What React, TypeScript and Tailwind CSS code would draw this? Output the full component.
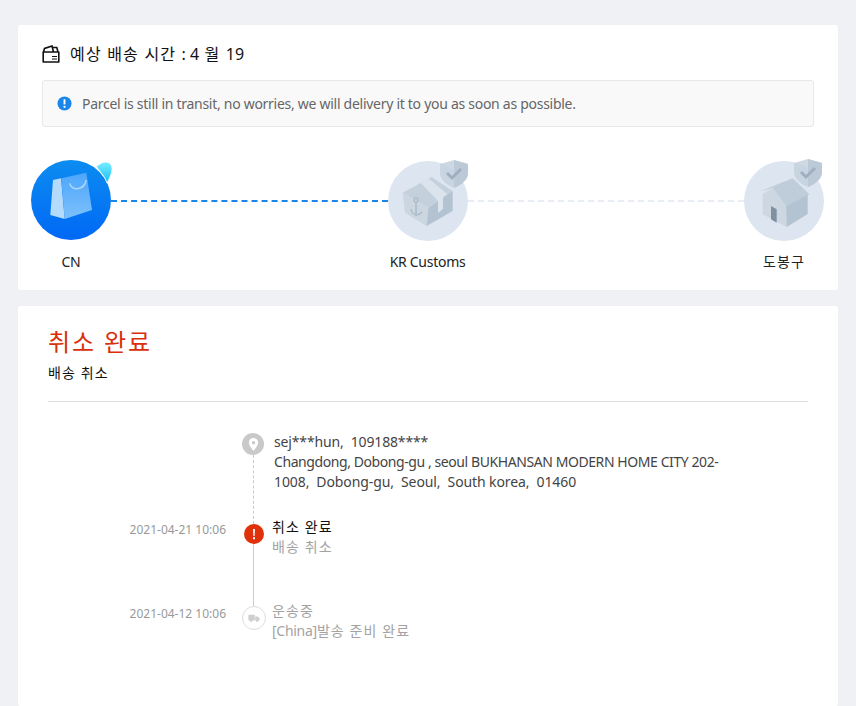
import React from "react";

function K({ children }: { children: React.ReactNode }) {
  return <span className="tracking-[1.1px]">{children}</span>;
}

function ShieldBadge({ className }: { className: string }) {
  return (
    <svg viewBox="0 0 28 28" className={`absolute h-7 w-7 ${className}`}>
      <path d="M14 0 L28 4 V13 C28 20 21 25 14 28 C7 25 0 20 0 13 V4 Z" fill="#c5d1de" fillOpacity="0.85" />
      <path d="M14 0 L28 4 V13 C28 20 21 25 14 28 Z" fill="#b9c7d5" fillOpacity="0.85" />
      <path d="M7 13 L12 18 L21 9" fill="none" stroke="#a0afbf" strokeWidth="3" />
    </svg>
  );
}

function BagIcon() {
  return (
    <svg viewBox="0 0 80 80" className="size-20">
      <defs>
        <linearGradient id="bg" x1="0" y1="0" x2="0" y2="1">
          <stop offset="0" stopColor="#0c8cf0" />
          <stop offset="1" stopColor="#0068f5" />
        </linearGradient>
        <linearGradient id="bag" x1="0" y1="0" x2="0" y2="1">
          <stop offset="0" stopColor="#4da6fb" />
          <stop offset="1" stopColor="#7cc0fc" />
        </linearGradient>
      </defs>
      <circle cx="40" cy="40" r="40" fill="url(#bg)" />
      <path d="M22 20 L30 18.3 L33.7 59 L19.3 55 Z" fill="#b4dafc" />
      <path d="M30.3 18.3 L55.3 12.7 L61 50 L33.7 59 Z" fill="url(#bag)" />
      <path d="M38.7 23.3 C40 31 53 31 55.3 20" fill="none" stroke="#a9d8fd" strokeWidth="1.5" />
    </svg>
  );
}

function BoxIcon() {
  return (
    <svg viewBox="0 0 80 80" className="size-20">
      <circle cx="40" cy="40" r="40" fill="#dce5f0" />
      <path d="M14.7 31.7 L43.7 16 L64.7 30 L40.3 46.7 Z" fill="#c4d1dd" />
      <path d="M14.7 31.7 L40.3 46.7 L38.7 65 L17 51.7 Z" fill="#cbd6e1" />
      <path d="M40.3 46.7 L64.7 30 V50 L38.7 65 Z" fill="#b3c3d2" />
      <path d="M32 21 L40 17 L59 33 L55 36 V48 L50 52 V40 Z" fill="#dbe4ec" />
      <path d="M28 41 V55 M23 48 C24 55 31 55 34 51" fill="none" stroke="#aebdcb" strokeWidth="1.6" />
      <circle cx="28" cy="39" r="2" fill="none" stroke="#aebdcb" strokeWidth="1.4" />
    </svg>
  );
}

function HouseIcon() {
  return (
    <svg viewBox="0 0 80 80" className="size-20">
      <circle cx="40" cy="40" r="40" fill="#dce5f0" />
      <path d="M18.7 33 L28.7 26.7 L42 45 L42.7 66 L18.7 53.3 Z" fill="#cdd7e1" />
      <path d="M42 45 L63.7 32 V53 L42.7 66 Z" fill="#b3c3d2" />
      <path d="M15.3 30.7 L48.7 17.3 L65.3 33.3 L42 45 L28.7 26.7 Z" fill="#bfcdda" />
      <path d="M27 45 L32.7 48.3 V61.7 L27 58.3 Z" fill="#7f909f" />
    </svg>
  );
}

function Step({ label, icon, children }: { label: React.ReactNode; icon: React.ReactNode; children?: React.ReactNode }) {
  return (
    <div className="relative flex w-20 shrink-0 flex-col items-center">
      <div className="h-[81px]">{icon}</div>
      {children}
      <div className="mt-[11px] whitespace-nowrap text-[14px] leading-5 text-[#222]">{label}</div>
    </div>
  );
}

export default function App() {
  return (
    <div className="flex h-[706px] flex-col gap-4 overflow-hidden bg-[#eff1f5] px-[18px] pt-[25px] font-['Noto_Sans','Noto_Sans_CJK_KR',sans-serif] tracking-[-0.28px]">
      <section className="h-[265px] shrink-0 rounded-[2px] bg-white pt-[19px]">
        <div className="mx-6 flex h-5 items-center gap-[10px] text-[16px] text-[#111]">
          <svg viewBox="0 0 18 18" className="size-[18px]" fill="none" stroke="#111" strokeWidth="1.6">
            <path d="M1.2 7 H16.8 V17 H1.2 Z" strokeLinejoin="round" />
            <path d="M1.5 7 L2.5 3.5 L10 1 L11.5 7" />
            <path d="M10.5 2.5 H14.8 L16 7" />
            <path d="M10 11.5 H15 M10 14 H15" strokeWidth="1" />
          </svg>
          <span className="tracking-[1.2px]">
            예상 배송 시간 <span className="tracking-normal">: 4</span> 월 <span className="tracking-normal">19</span>
          </span>
        </div>
        <div className="mx-6 mt-[16px] flex h-[47px] items-center gap-[10px] rounded-[3px] border border-[#e8e8e8] bg-[#f9f9f9] px-[14px] text-[14px] text-[#666]">
          <svg viewBox="0 0 16 16" className="size-[15px] shrink-0">
            <circle cx="8" cy="8" r="7.5" fill="#1a86ea" />
            <path d="M8 3.5 V9" stroke="#fff" strokeWidth="2" />
            <circle cx="8" cy="11.5" r="1.2" fill="#fff" />
          </svg>
          <span>Parcel is still in transit, no worries, we will delivery it to you as soon as possible.</span>
        </div>
        <div className="mt-[33px] flex items-start pl-[13px] pr-[14px]">
          <Step label="CN" icon={<BagIcon />}>
            <svg viewBox="0 0 18 23" className="absolute right-[-2px] top-[1px] h-[23px] w-[18px]">
              <defs>
                <linearGradient id="drop" x1="0" y1="0" x2="0" y2="1">
                  <stop offset="0" stopColor="#7cecff" />
                  <stop offset="1" stopColor="#12c0f6" />
                </linearGradient>
              </defs>
              <path d="M1 5 C4 4.5 6 1 10.5 1 C15 1 17.5 4 17 9 C16.5 14 13.5 19 12 22 C10 15 4 10 1 5 Z" fill="url(#drop)" stroke="#fff" strokeWidth="0.8" />
            </svg>
          </Step>
          <div className="mt-[40px] flex-1 border-t-2 border-dashed border-[#1a86ea]" />
          <Step label="KR Customs" icon={<div className="pt-px"><BoxIcon /></div>}>
            <ShieldBadge className="right-0 top-0" />
          </Step>
          <div className="mt-[40px] flex-1 border-t-2 border-dashed border-[#e8edf3]" />
          <Step label={<K>도봉구</K>} icon={<div className="pt-px"><HouseIcon /></div>}>
            <ShieldBadge className="right-[2px] top-[-1px]" />
          </Step>
        </div>
      </section>

      <section className="flex-1 rounded-[2px] bg-white px-[30px] pt-[19px]">
        <div className="text-[24px] leading-[34px] tracking-[1.9px] text-[#d9300b]">취소 완료</div>
        <div className="mt-[4px] border-b border-[#dcdcdc] pb-[18px] text-[14px] leading-5 text-[#111]"><K>배송 취소</K></div>
        <div className="mt-[30px] flex flex-col">
          <div className="flex h-[92px]">
            <div className="w-[194px] shrink-0" />
            <div className="flex w-[24px] shrink-0 flex-col items-center">
              <div className="-ml-[2px] mt-px flex size-[22px] items-center justify-center rounded-full bg-[#c9c9c9]">
                <svg viewBox="0 0 12 14" className="h-[13px] w-[11px]">
                  <path fillRule="evenodd" d="M6 0 C9 0 11 2 11 5 C11 8 8 11 6 14 C4 11 1 8 1 5 C1 2 3 0 6 0 Z M6 3.3 A1.8 1.8 0 1 0 6 6.9 A1.8 1.8 0 1 0 6 3.3 Z" fill="#fff" />
                </svg>
              </div>
              <div className="-ml-px flex-1 border-l border-dashed border-[#c9c9c9]" />
            </div>
            <div className="ml-[8px] w-[462px] whitespace-pre-wrap text-[14px] leading-5 text-[#444]">
              <div className="tracking-[-0.14px]">{"sej***hun,  109188****"}</div>
              <div className="tracking-[-0.42px]">Changdong, Dobong-gu , seoul BUKHANSAN MODERN HOME CITY 202-</div>
              <div className="tracking-[-0.1px]">{"1008,  Dobong-gu,  Seoul,  South korea,  01460"}</div>
            </div>
          </div>
          <div className="flex h-[82px]">
            <div className="-mt-[3px] w-[178px] shrink-0 text-right text-[12px] leading-[18px] tracking-normal text-[#999]">2021-04-21 10:06</div>
            <div className="ml-[16px] flex w-[24px] shrink-0 flex-col items-center">
              <div className="flex size-5 items-center justify-center rounded-full bg-[#e0310a]">
                <svg viewBox="0 0 4 12" className="h-3 w-1" fill="#fff">
                  <path d="M1 1 H3 L2.6 8 H1.4 Z" />
                  <rect x="1" y="9.2" width="2" height="2" />
                </svg>
              </div>
              <div className="-ml-px w-px flex-1 bg-[#cfcfcf]" />
            </div>
            <div className="ml-[6px] -mt-[7px] text-[14px] leading-5">
              <div className="text-[#111]"><K>취소 완료</K></div>
              <div className="text-[#a3a3a3]"><K>배송 취소</K></div>
            </div>
          </div>
          <div className="flex">
            <div className="-mt-px w-[178px] shrink-0 text-right text-[12px] leading-[18px] tracking-normal text-[#999]">2021-04-12 10:06</div>
            <div className="ml-[16px] flex w-[24px] shrink-0 flex-col items-center">
              <div className="flex size-6 items-center justify-center rounded-full border border-[#ddd] bg-white">
                <svg viewBox="0 0 14 10" className="h-[8px] w-[12px]" fill="#cfcfcf">
                  <path d="M0 1 H8 V8 H0 Z M8.5 3 H12 L14 5.5 V8 H8.5 Z" />
                  <circle cx="3.5" cy="8.5" r="1.5" />
                  <circle cx="11" cy="8.5" r="1.5" />
                </svg>
              </div>
            </div>
            <div className="ml-[6px] -mt-[5px] text-[14px] leading-5 text-[#a3a3a3]">
              <div><K>운송중</K></div>
              <div>[China]<K>발송 준비 완료</K></div>
            </div>
          </div>
        </div>
      </section>
    </div>
  );
}
